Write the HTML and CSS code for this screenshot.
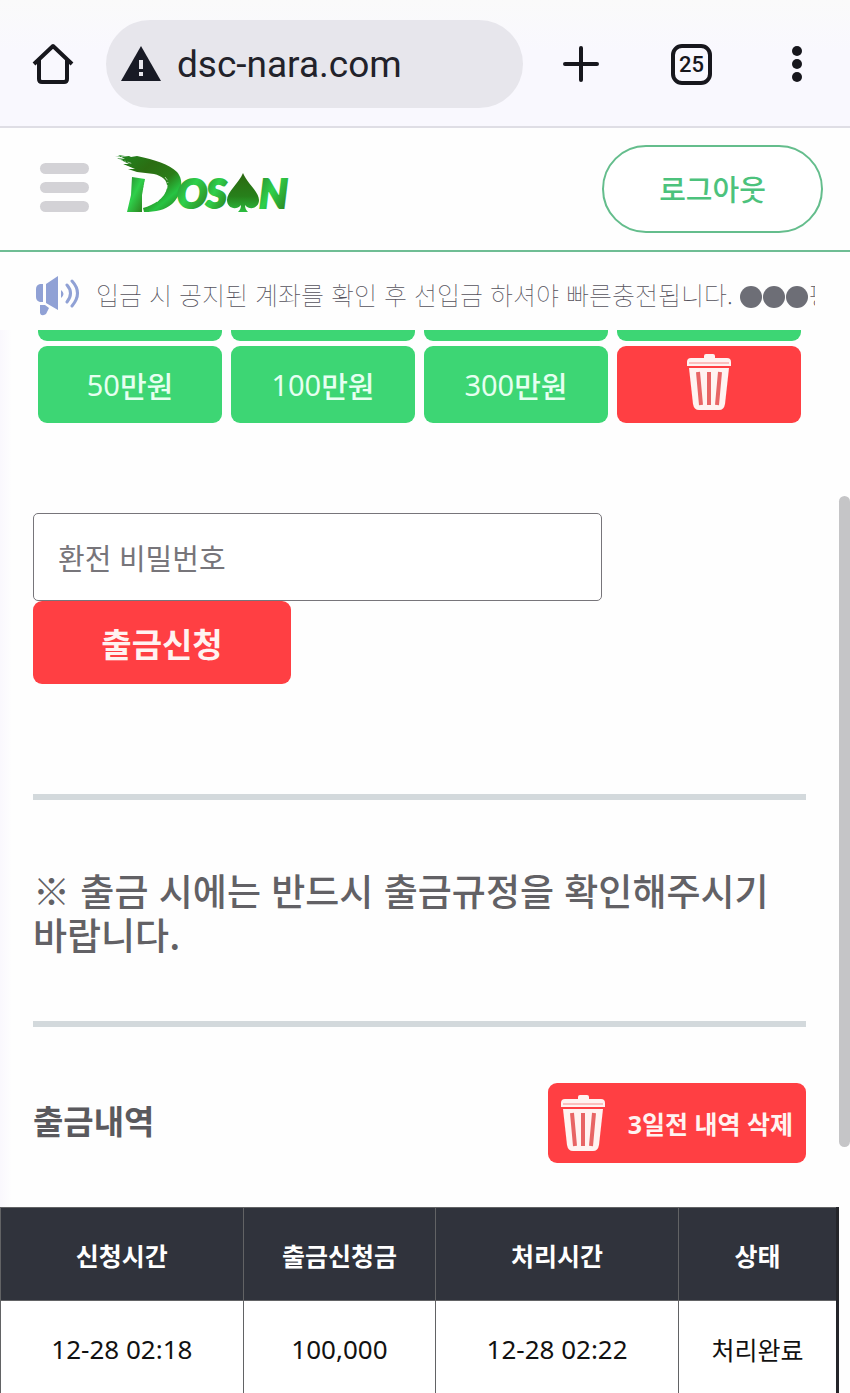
FILE: index.html
```html
<!DOCTYPE html>
<html lang="ko">
<head>
    <meta charset="UTF-8">
    <meta name="viewport" content="width=device-width, initial-scale=1.0">
    <title>DOSAN</title>
    <link rel="stylesheet" href="styles.css">
</head>
<body>
    <svg class="defs" aria-hidden="true">
        <symbol id="trash" viewBox="0 0 46 58">
            <path fill="#fff3f1" d="M18 5V3q0-2 2-2h7q2 0 2 2v2h12q4 0 4 4v4H1V9q0-4 4-4z"/>
            <path fill="#fff3f1" d="M3 15h40l-4 36q-1 6-6 6H13q-5 0-6-6z"/>
            <path fill="none" stroke="#f88b8b" stroke-width="1" d="M3 10h40"/>
            <path fill="none" stroke="#e86464" stroke-width="4" d="M12 19l3 33M23 19v33M34 19l-3 33"/>
        </symbol>
    </svg>

    <div class="browser-bar">
        <button class="icon-btn" aria-label="홈">
            <svg width="42" height="42" viewBox="0 0 42 42" fill="none" stroke="#17171d" stroke-width="4" stroke-linejoin="round">
                <path d="M2 21L21 3l19 18M7 17v19q0 3 3 3h22q3 0 3-3V17"/>
            </svg>
        </button>
        <div class="address">
            <svg width="40" height="36" viewBox="0 0 40 36">
                <path fill="#181a25" d="M20 0l20 35H0z"/>
                <path fill="#e7e6ec" d="M18 14h4v9h-4zM18 26h4v4h-4z"/>
            </svg>
            <span>dsc-nara.com</span>
        </div>
        <button class="icon-btn" aria-label="새 탭">
            <svg width="36" height="36" viewBox="0 0 36 36" stroke="#17171d" stroke-width="4" stroke-linecap="round">
                <path d="M18 2v32M2 18h32"/>
            </svg>
        </button>
        <button class="icon-btn tab-count">25</button>
        <button class="icon-btn" aria-label="메뉴">
            <svg width="10" height="38" viewBox="0 0 10 38" fill="#17171d">
                <circle cx="5" cy="6" r="5"/><circle cx="5" cy="19" r="5"/><circle cx="5" cy="32" r="5"/>
            </svg>
        </button>
    </div>

    <header class="site-header">
        <button class="menu-btn" aria-label="메뉴"><i></i><i></i><i></i></button>
        <a class="logo" href="#" aria-label="DOSAN">
            <svg width="180" height="64" viewBox="0 0 180 64">
                <defs>
                    <linearGradient id="brush" x1="0" y1="0" x2="1" y2="1">
                        <stop offset="0" stop-color="#1f8a22"/>
                        <stop offset=".35" stop-color="#2b6d12"/>
                        <stop offset=".6" stop-color="#2a7c17"/>
                        <stop offset=".78" stop-color="#27c443"/>
                        <stop offset="1" stop-color="#276f15"/>
                    </linearGradient>
                    <linearGradient id="leaf" x1="0" y1="0" x2="1" y2="1">
                        <stop offset="0" stop-color="#28812a"/>
                        <stop offset=".45" stop-color="#2fd04b"/>
                        <stop offset="1" stop-color="#2c7316"/>
                    </linearGradient>
                    <linearGradient id="spade" x1="0" y1="0" x2="0" y2="1">
                        <stop offset="0" stop-color="#2c6810"/>
                        <stop offset=".6" stop-color="#27801b"/>
                        <stop offset="1" stop-color="#2bbd3f"/>
                    </linearGradient>
                </defs>
                <path fill="url(#brush)" d="M1 2l5 0 9-1 2 1 6-1c18 4 32 8 40 16 8 9 4 24-5 32-7 6-16 8-28 8l-1-4c11-3 22-10 24-20 1-8-5-12-13-14l-17-2-9-3 7 0-12-5 6 0-12-6 8 1-7-4 7 1z"/>
                <path fill="url(#leaf)" d="M18 22l13 2-3 16 0 17-15 0 4-17z"/>
                <path stroke="#fff" stroke-width="1" opacity=".6" fill="none" stroke-dasharray="4 2 1 2" d="M5 4l14 5M6 8l13 6M10 13l12 5M31 27l-2 9M51 22l3 4-1 7-3 6-7 8"/>
                <g class="logo-text">
                    <text fill="url(#leaf)" stroke="url(#leaf)" x="63" y="53">O</text>
                    <text fill="url(#leaf)" stroke="url(#leaf)" x="92" y="53">S</text>
                    <text fill="url(#leaf)" stroke="url(#leaf)" x="145" y="53">N</text>
                </g>
                <path fill="url(#spade)" d="M129 18c4 10 16 19 16 27 0 8-9 11-14 5 0 3 1 5 3 7h-10c2-2 3-4 3-7-5 6-14 3-14-5 0-8 12-17 16-27z"/>
            </svg>
        </a>
        <button class="logout">로그아웃</button>
    </header>

    <div class="notice">
        <svg width="44" height="40" viewBox="0 0 44 40" fill="#90a1d5">
            <path d="M4 8h3v18H4q-4-1-4-5v-8q0-4 4-5zM10 8L22 0v34l-12-7zM4 29h5l4 3-3 6q-5 3-6-1z"/>
            <path d="M25 14q5 4 0 8z"/>
            <path fill="none" stroke="#90a1d5" stroke-width="3" stroke-linecap="round" d="M31 9q7 8 0 17M36 5q11 12 0 25"/>
        </svg>
        <p>입금 시 공지된 계좌를 확인 후 선입금 하셔야 빠른충전됩니다. <span class="dots"><i></i><i></i><i></i></span>평</p>
    </div>

    <main>
        <section class="request">
            <div class="amounts amounts-cut">
                <button></button><button></button><button></button><button></button>
            </div>
            <div class="amounts">
                <button><span>50</span>만원</button>
                <button><span>100</span>만원</button>
                <button><span>300</span>만원</button>
                <button class="red" aria-label="삭제"><svg width="46" height="58"><use href="#trash"/></svg></button>
            </div>
            <input class="password" type="password" placeholder="환전 비밀번호" aria-label="환전 비밀번호">
            <button class="submit red">출금신청</button>
        </section>

        <p class="guide">※ 출금 시에는 반드시 출금규정을 확인해주시기 바랍니다.</p>

        <div class="history-head">
            <h2>출금내역</h2>
            <button class="delete red"><svg width="46" height="58"><use href="#trash"/></svg>3일전 내역 삭제</button>
        </div>

        <table>
            <thead>
                <tr><th class="time">신청시간</th><th class="money">출금신청금</th><th class="time">처리시간</th><th>상태</th></tr>
            </thead>
            <tbody>
                <tr><td class="num">12-28 02:18</td><td class="num">100,000</td><td class="num">12-28 02:22</td><td>처리완료</td></tr>
            </tbody>
        </table>
    </main>
    <div class="scroll-thumb"></div>
</body>
</html>
```
FILE: styles.css
```css
* {
    box-sizing: border-box;
}
body {
    margin: 0;
    height: 100vh;
    overflow: hidden;
    position: relative;
    background: #fefefe;
    font-family: "Noto Sans", "Noto Sans CJK KR", sans-serif;
}
button {
    font-family: inherit;
    border: none;
    padding: 0;
    cursor: pointer;
}
svg {
    display: block;
    flex-shrink: 0;
}
.defs {
    position: absolute;
    width: 0;
    height: 0;
}

/* browser bar */
.browser-bar {
    display: flex;
    align-items: center;
    height: 128px;
    padding: 2px 48px 0 32px;
    background: linear-gradient(#fafafa, #f9f8fe 40%);
    border-bottom: 2px solid #dfdee5;
}
.icon-btn {
    background: none;
    color: #17171d;
}
.address {
    display: flex;
    align-items: center;
    flex: 1;
    gap: 16px;
    height: 88px;
    padding-left: 15px;
    margin: 0 40px 0 32px;
    border-radius: 44px;
    background: #e7e6ec;
    color: #22222a;
    font-family: Roboto, sans-serif;
    font-size: 37px;
}
.tab-count {
    width: 41px;
    height: 41px;
    margin: 0 80px 0 72px;
    border: 4px solid #17171d;
    border-radius: 11px;
    font: 500 22px Roboto, sans-serif;
}

/* site header */
.site-header {
    display: flex;
    align-items: center;
    height: 124px;
    padding: 0 27px 0 40px;
    border-bottom: 2px solid #6fbd94;
}
.menu-btn {
    display: flex;
    flex-direction: column;
    gap: 8px;
    width: 49px;
    margin-bottom: 4px;
    background: none;
}
.menu-btn i {
    height: 11px;
    border-radius: 6px;
    background: #d3d2d6;
}
.logo {
    margin: 0 0 4px 25px;
}
.logo-text {
    font: italic 900 40px Lato, sans-serif;
    stroke-width: 2px;
}
.logout {
    width: 221px;
    height: 88px;
    padding-bottom: 2px;
    margin-left: auto;
    border: 2px solid #64bd8c;
    border-radius: 44px;
    background: #fff;
    color: #4cc27c;
    font-size: 29px;
    font-weight: 500;
}
.notice {
    display: flex;
    align-items: center;
    gap: 16px;
    height: 78px;
    padding: 10px 35px 0 36px;
}
.notice p {
    margin: 0 0 4px;
    overflow: hidden;
    white-space: nowrap;
    font-family: "Noto Sans CJK KR", sans-serif;
    font-size: 25px;
    font-weight: 100;
    line-height: 40px;
    color: #55525c;
}
.dots i {
    display: inline-block;
    width: 22px;
    height: 22px;
    margin-right: 1px;
    border-radius: 50%;
    background: #6d6e76;
    vertical-align: -3px;
}

/* withdraw form */
main {
    margin-right: 11px;
    background: linear-gradient(to right, #faf8fd, #fefefe 12px);
}
.request {
    padding: 0 33px;
}
.amounts {
    display: grid;
    grid-template-columns: repeat(4, 1fr);
    gap: 9px;
    padding: 0 5px;
}
.amounts button {
    display: flex;
    align-items: center;
    justify-content: center;
    height: 77px;
    border-radius: 9px;
    background: #3dd674;
    color: #e6fff0;
    font-size: 29px;
    font-weight: 500;
}
.amounts span {
    font-weight: 400;
}
.amounts-cut {
    height: 11px;
    margin-bottom: 5px;
    overflow: hidden;
    align-items: end;
    align-content: end;
}
.amounts .red,
.red {
    background: #ff3f43;
    color: #fff3f1;
}
.amounts svg {
    margin-bottom: 6px;
}
.password {
    display: block;
    width: 569px;
    max-width: 100%;
    height: 88px;
    margin-top: 90px;
    padding: 3px 24px 0;
    border: 1px solid #77757a;
    border-radius: 5px;
    background: #fff;
    font-family: inherit;
    font-size: 29px;
}
.password::placeholder {
    color: #77757a;
}
.submit {
    width: 258px;
    height: 83px;
    border-radius: 9px;
    font-size: 33px;
    font-weight: 700;
}
.guide {
    margin: 110px 33px 0;
    padding: 68px 0 65px;
    border: solid #d3d9dc;
    border-width: 6px 0;
    color: #626165;
    font-family: "Noto Sans CJK KR", sans-serif;
    font-size: 37px;
    font-weight: 500;
    line-height: 44px;
}
.history-head {
    display: flex;
    align-items: center;
    justify-content: space-between;
    padding: 56px 33px 44px;
}
.history-head h2 {
    margin: 0 0 6px;
    color: #5a595d;
    font-size: 33px;
    font-weight: 700;
}
.delete {
    display: flex;
    align-items: center;
    justify-content: space-between;
    width: 258px;
    height: 80px;
    padding: 0 13px 0 12px;
    border-radius: 9px;
    font-size: 25px;
    font-weight: 700;
}

/* history table */
table {
    width: 100%;
    table-layout: fixed;
    border-collapse: collapse;
    border-right: 3px solid #24252a;
    font-size: 25px;
    text-align: center;
}
th,
td {
    padding: 0;
    border: 1px solid #626365;
}
th {
    height: 93px;
    padding-top: 2px;
    background: #30333c;
    color: #fff;
    font-weight: 700;
}
td {
    height: 96px;
    background: #fff;
    color: #111;
}
.num {
    font-size: 26px;
}
.time {
    width: 29%;
}
.money {
    width: 23%;
}

.scroll-thumb {
    position: absolute;
    top: 496px;
    right: 0;
    width: 11px;
    height: 651px;
    border-radius: 6px;
    background: #c5c5c7;
}
```
